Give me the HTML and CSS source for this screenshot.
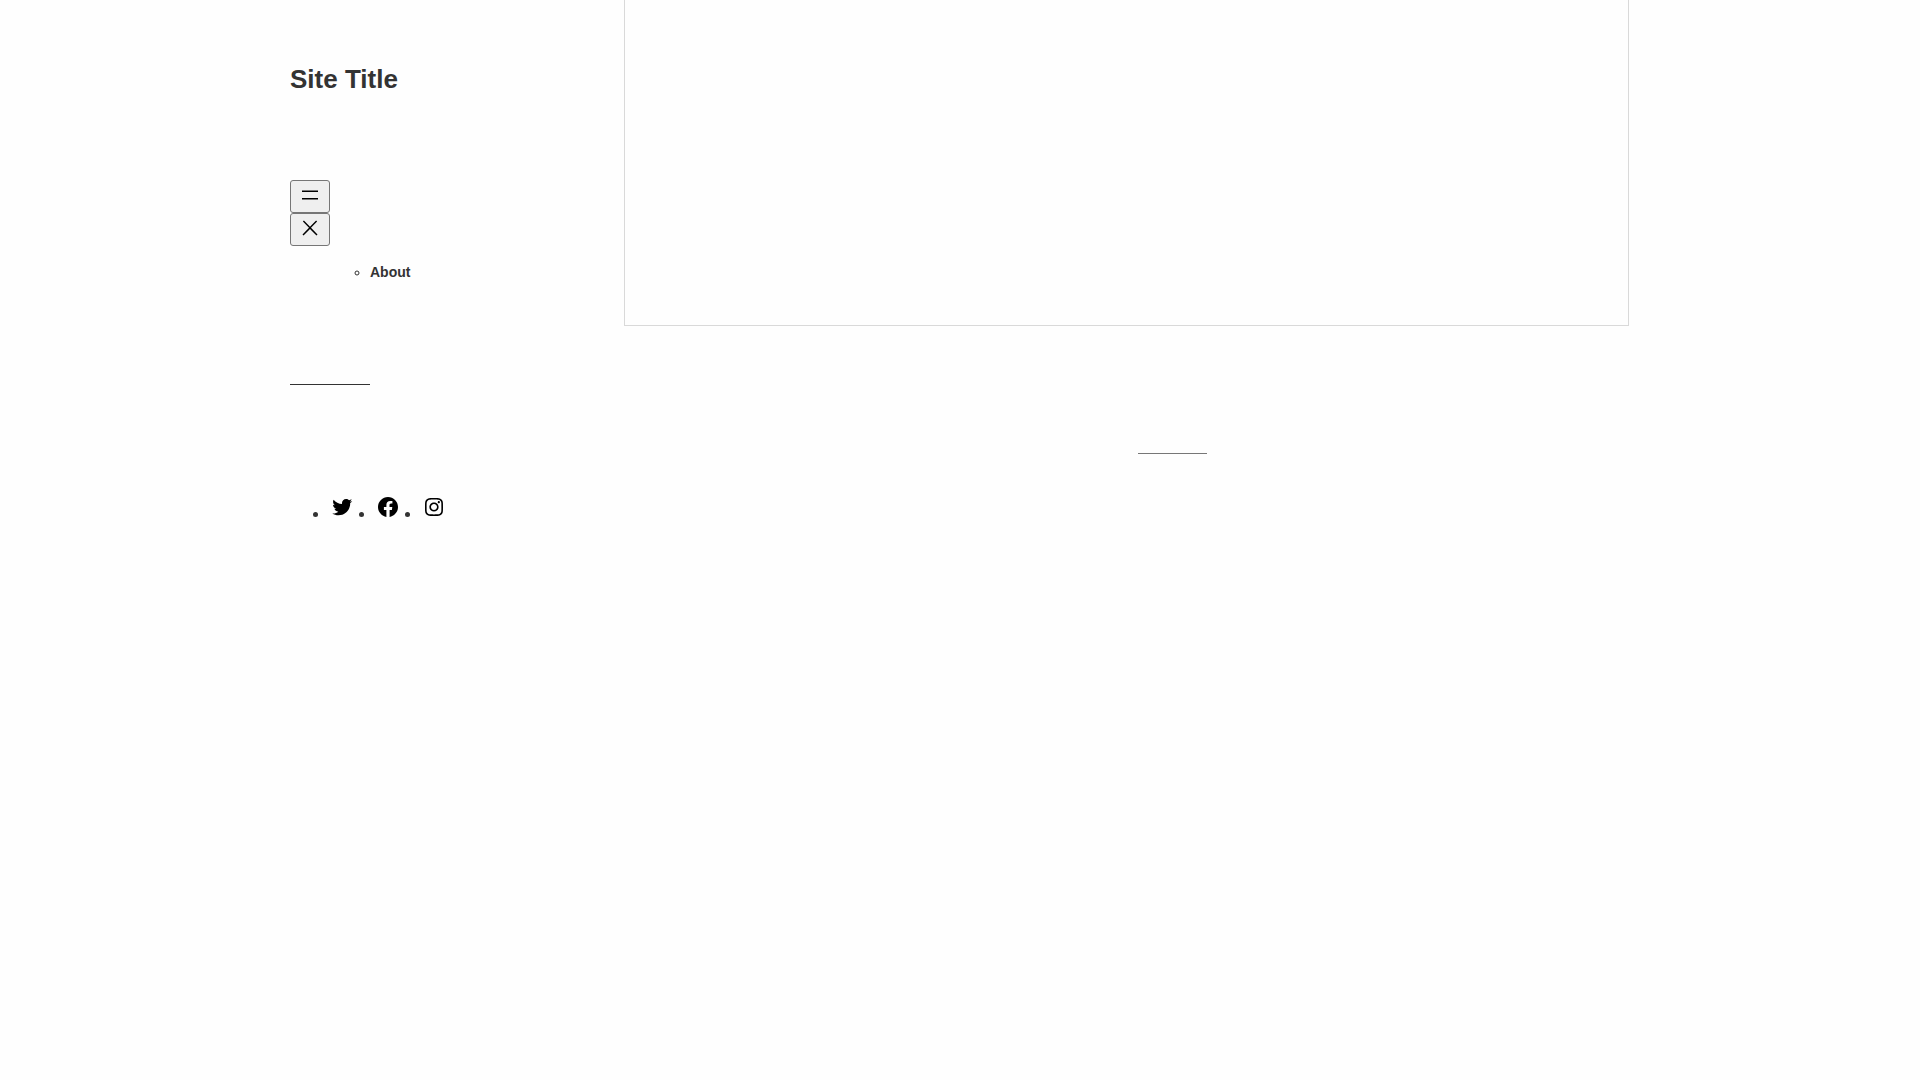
FILE: index.html
```html
<!DOCTYPE html>
<html lang="en">
<head>
<meta charset="utf-8">
<meta name="viewport" content="width=device-width, initial-scale=1">
<title>Site Title</title>
<link rel="stylesheet" href="styles.css">
</head>
<body>
<div class="site">
  <header class="sidebar">
    <h1 class="site-title"><a href="#">Site Title</a></h1>
    <nav class="navigation" aria-label="Main">
      <button class="nav-button" type="button" aria-label="Open menu">
        <svg width="24" height="24" viewBox="0 0 24 24" aria-hidden="true"><rect x="4" y="7.5" width="16" height="1.5"/><rect x="4" y="15" width="16" height="1.5"/></svg>
      </button>
      <button class="nav-button" type="button" aria-label="Close menu">
        <svg width="24" height="24" viewBox="0 0 24 24" aria-hidden="true"><path d="M13 11.8l6.1-6.3-1-1-6.1 6.2-6.1-6.2-1 1 6.1 6.3-6.5 6.7 1 1 6.5-6.6 6.5 6.6 1-1z"/></svg>
      </button>
      <ul class="menu">
        <li><a href="#">About</a></li>
      </ul>
    </nav>
    <hr class="separator">
    <ul class="social">
      <li><a href="#" aria-label="Twitter"><svg width="24" height="24" viewBox="0 0 24 24" aria-hidden="true"><path d="M22.23,5.924c-0.736,0.326-1.527,0.547-2.357,0.646c0.847-0.508,1.498-1.312,1.804-2.27c-0.793,0.47-1.671,0.812-2.606,0.996C18.324,4.498,17.257,4,16.077,4c-2.266,0-4.103,1.837-4.103,4.103c0,0.322,0.036,0.635,0.106,0.935C8.67,8.867,5.647,7.234,3.623,4.751C3.27,5.357,3.067,6.062,3.067,6.814c0,1.424,0.724,2.679,1.825,3.415c-0.673-0.021-1.305-0.206-1.859-0.513c0,0.017,0,0.034,0,0.052c0,1.988,1.414,3.647,3.292,4.023c-0.344,0.094-0.707,0.144-1.081,0.144c-0.264,0-0.521-0.026-0.772-0.074c0.522,1.63,2.038,2.816,3.833,2.85c-1.404,1.1-3.174,1.756-5.096,1.756c-0.331,0-0.658-0.019-0.979-0.057c1.816,1.164,3.973,1.843,6.29,1.843c7.547,0,11.675-6.252,11.675-11.675c0-0.178-0.004-0.355-0.012-0.531C20.985,7.47,21.68,6.747,22.23,5.924z"/></svg></a></li>
      <li><a href="#" aria-label="Facebook"><svg width="24" height="24" viewBox="0 0 24 24" aria-hidden="true"><path d="M12 2C6.5 2 2 6.5 2 12c0 5 3.7 9.1 8.4 9.9v-7H7.9V12h2.5V9.8c0-2.5 1.5-3.9 3.8-3.9 1.1 0 2.2.2 2.2.2v2.5h-1.3c-1.2 0-1.6.8-1.6 1.6V12h2.8l-.4 2.9h-2.3v7C18.300 21.100 22 17 22 12c0-5.500-4.500-10-10-10z"/></svg></a></li>
      <li><a href="#" aria-label="Instagram"><svg width="24" height="24" viewBox="0 0 24 24" aria-hidden="true"><path d="M12,4.622c2.403,0,2.688,0.009,3.637,0.052c0.877,0.040,1.354,0.187,1.671,0.310c0.420,0.163,0.720,0.358,1.035,0.673c0.315,0.315,0.510,0.615,0.673,1.035c0.123,0.317,0.270,0.794,0.310,1.671c0.043,0.949,0.052,1.234,0.052,3.637s-0.009,2.688-0.052,3.637c-0.040,0.877-0.187,1.354-0.310,1.671c-0.163,0.420-0.358,0.720-0.673,1.035c-0.315,0.315-0.615,0.510-1.035,0.673c-0.317,0.123-0.794,0.270-1.671,0.310c-0.949,0.043-1.233,0.052-3.637,0.052s-2.688-0.009-3.637-0.052c-0.877-0.040-1.354-0.187-1.671-0.310c-0.420-0.163-0.720-0.358-1.035-0.673c-0.315-0.315-0.510-0.615-0.673-1.035c-0.123-0.317-0.270-0.794-0.310-1.671C4.631,14.688,4.622,14.403,4.622,12s0.009-2.688,0.052-3.637c0.040-0.877,0.187-1.354,0.310-1.671c0.163-0.420,0.358-0.720,0.673-1.035c0.315-0.315,0.615-0.510,1.035-0.673c0.317-0.123,0.794-0.270,1.671-0.310C9.312,4.631,9.597,4.622,12,4.622M12,3C9.556,3,9.249,3.010,8.289,3.054C7.331,3.098,6.677,3.250,6.105,3.472C5.513,3.702,5.011,4.010,4.511,4.511c-0.500,0.500-0.808,1.002-1.038,1.594C3.250,6.677,3.098,7.331,3.054,8.289C3.010,9.249,3,9.556,3,12c0,2.444,0.010,2.751,0.054,3.711c0.044,0.958,0.196,1.612,0.418,2.185c0.230,0.592,0.538,1.094,1.038,1.594c0.500,0.500,1.002,0.808,1.594,1.038c0.572,0.222,1.227,0.375,2.185,0.418C9.249,20.990,9.556,21,12,21s2.751-0.010,3.711-0.054c0.958-0.044,1.612-0.196,2.185-0.418c0.592-0.230,1.094-0.538,1.594-1.038c0.500-0.500,0.808-1.002,1.038-1.594c0.222-0.572,0.375-1.227,0.418-2.185C20.990,14.751,21,14.444,21,12s-0.010-2.751-0.054-3.711c-0.044-0.958-0.196-1.612-0.418-2.185c-0.230-0.592-0.538-1.094-1.038-1.594c-0.500-0.500-1.002-0.808-1.594-1.038c-0.572-0.222-1.227-0.375-2.185-0.418C14.751,3.010,14.444,3,12,3L12,3z M12,7.378c-2.552,0-4.622,2.069-4.622,4.622S9.448,16.622,12,16.622s4.622-2.069,4.622-4.622S14.552,7.378,12,7.378z M12,15c-1.657,0-3-1.343-3-3s1.343-3,3-3s3,1.343,3,3S13.657,15,12,15z M16.804,6.116c-0.596,0-1.080,0.484-1.080,1.080s0.484,1.080,1.080,1.080c0.596,0,1.080-0.484,1.080-1.080S17.401,6.116,16.804,6.116z"/></svg></a></li>
    </ul>
  </header>
  <div class="content">
    <main class="panel"></main>
    <footer class="footer"><hr class="footer-rule"></footer>
  </div>
</div>
</body>
</html>
```
FILE: styles.css
```css
* {
  box-sizing: border-box;
}

body {
  margin: 0;
  background: #fefefe;
  color: #333;
  font-family: "Liberation Sans", Arial, sans-serif;
  font-size: 18px;
}

a {
  color: inherit;
  text-decoration: none;
}

.site {
  display: grid;
  grid-template-columns: 334px minmax(0, 1005px);
  max-width: 1340px;
  margin: 0 auto;
}

.sidebar {
  padding-top: 64px;
}

.site-title {
  margin: 0;
  font-size: 26px;
  line-height: 30px;
}

.navigation {
  display: flex;
  flex-direction: column;
  align-items: flex-start;
  margin-top: 86px;
}

.nav-button {
  width: 40px;
  height: 33px;
  padding: 2px 7px 5px;
  border: 1px solid #767676;
  border-radius: 3px;
  background: #efefef;
}

.nav-button svg,
.social svg {
  display: block;
}

.menu {
  margin: 16px 0 0;
  padding-left: 80px;
  font-size: 14px;
  font-weight: 700;
  line-height: 20px;
  list-style: circle;
}

.separator {
  width: 80px;
  margin: 102px 0 0;
  border: 0;
  border-top: 1px solid #333;
}

.social {
  display: flex;
  gap: 22px;
  margin: 110px 0 0;
  padding-left: 40px;
}

.social li {
  line-height: 36px;
}

.social a {
  display: inline-block;
  vertical-align: baseline;
  color: #000;
}

.panel {
  height: 326px;
  border: 1px solid #d9d9d9;
  border-top: 0;
}

.footer {
  display: flex;
  justify-content: center;
  padding: 127px 0 64px 92px;
}

.footer-rule {
  width: 69px;
  margin: 0;
  border: 0;
  border-top: 1px solid #777;
}
```
